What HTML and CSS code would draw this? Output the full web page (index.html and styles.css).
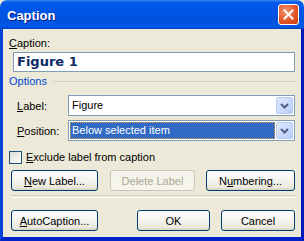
FILE: index.html
```html
<!DOCTYPE html>
<html lang="en">
<head>
  <meta charset="UTF-8" />
  <title>Caption</title>
  <link rel="stylesheet" href="styles.css">
</head>
<body>
  <div class="window">
    <div class="titlebar">
      <span class="title">Caption</span>
      <span class="close-btn">
        <svg width="11" height="11" viewBox="0 0 11 11">
          <path d="M1.5 1.5 L9.5 9.5 M9.5 1.5 L1.5 9.5" stroke="#fff" stroke-width="2" stroke-linecap="square"/>
        </svg>
      </span>
    </div>

    <div class="client">
      <div class="field-label"><u>C</u>aption:</div>
      <div class="textbox">Figure 1</div>

      <div class="group-head">
        <span>Options</span>
        <span class="rule"></span>
      </div>

      <div class="option-rows">
        <span class="row-label"><u>L</u>abel:</span>
        <div class="combo">
          <span class="combo-text">Figure</span>
          <span class="combo-btn">
            <svg width="9" height="6" viewBox="0 0 9 6"><path d="M1 1 L4.5 4.5 L8 1" fill="none" stroke="#4d6185" stroke-width="2"/></svg>
          </span>
        </div>

        <span class="row-label"><u>P</u>osition:</span>
        <div class="combo">
          <span class="combo-text selected">Below selected item</span>
          <span class="combo-btn">
            <svg width="9" height="6" viewBox="0 0 9 6"><path d="M1 1 L4.5 4.5 L8 1" fill="none" stroke="#4d6185" stroke-width="2"/></svg>
          </span>
        </div>
      </div>

      <div class="check-row">
        <span class="checkbox"></span>
        <span><u>E</u>xclude label from caption</span>
      </div>

      <div class="button-row">
        <button class="btn btn-new"><u>N</u>ew Label...</button>
        <button class="btn btn-delete" disabled>Delete Label</button>
        <button class="btn btn-numbering">N<u>u</u>mbering...</button>
      </div>

      <div class="separator"></div>

      <div class="button-row">
        <button class="btn btn-auto"><u>A</u>utoCaption...</button>
        <button class="btn btn-ok">OK</button>
        <button class="btn btn-cancel">Cancel</button>
      </div>
    </div>
  </div>
</body>
</html>
```

FILE: styles.css
```css
body {
  margin: 0;
  padding: 0;
  width: 304px;
  height: 241px;
  overflow: hidden;
  background: #ece9d8;
  font-family: 'Liberation Sans', Arial, sans-serif;
  font-size: 11px;
  color: #000;
}

u {
  text-decoration: underline;
  text-underline-offset: 1px;
}

.window {
  width: 304px;
  height: 241px;
  display: flex;
  flex-direction: column;
}

.titlebar {
  height: 29px;
  flex: none;
  display: flex;
  align-items: center;
  justify-content: space-between;
  padding: 0 5px 0 7px;
  box-sizing: border-box;
  border-radius: 7px 7px 0 0;
  background: linear-gradient(to bottom,
    #3d8cf5 0px, #0a5fe8 2px, #0058ee 4px, #0055e5 12px,
    #0052dc 20px, #0059ea 25px, #0050d6 28px, #0042c0 29px);
}

.title {
  color: #fff;
  font-weight: bold;
  font-size: 13px;
  text-shadow: 1px 1px 0 #0a1f88;
  padding-top: 1px;
}

.close-btn {
  width: 21px;
  height: 21px;
  box-sizing: border-box;
  border: 1px solid #fff;
  border-radius: 3px;
  background: radial-gradient(circle at 35% 30%, #f0906a 0%, #e2582a 55%, #c93d10 100%);
  display: flex;
  align-items: center;
  justify-content: center;
}

.client {
  flex: 1;
  display: flex;
  flex-direction: column;
  padding: 8px 6px 0 6px;
  border-left: 3px solid #0842d6;
  border-right: 3px solid #0019b8;
  border-bottom: 4px solid #0022c8;
}

.field-label {
  line-height: 13px;
}

.textbox {
  margin: 2px 0 0 4px;
  height: 20px;
  box-sizing: border-box;
  border: 1px solid #7f9db9;
  background: #fff;
  padding-left: 3px;
  font-family: 'DejaVu Sans', sans-serif;
  font-weight: bold;
  font-size: 13px;
  line-height: 18px;
  color: #0b2a66;
}

.group-head {
  margin-top: 3px;
  display: flex;
  align-items: center;
  line-height: 13px;
  color: #0046d5;
}

.rule {
  flex: 1;
  margin-left: 6px;
  height: 1px;
  background: #d0d0bf;
}

.option-rows {
  margin-top: 7px;
  display: grid;
  grid-template-columns: 51px 1fr;
  row-gap: 4px;
  padding-left: 8px;
  align-items: center;
}

.combo {
  height: 21px;
  box-sizing: border-box;
  border: 1px solid #7f9db9;
  background: #fff;
  padding: 1px;
  display: flex;
}

.combo-text {
  flex: 1;
  padding-left: 2px;
  line-height: 17px;
  margin-right: 1px;
}

.combo-text.selected {
  background: #316ac5;
  color: #fff;
  outline: 1px dotted #e0a040;
  outline-offset: -1px;
}

.combo-btn {
  width: 17px;
  flex: none;
  box-sizing: border-box;
  border: 1px solid #b9ccf4;
  border-radius: 2px;
  background: linear-gradient(to bottom right, #dfe9fe, #b8cdf9);
  display: flex;
  align-items: center;
  justify-content: center;
}

.check-row {
  margin-top: 10px;
  display: flex;
  align-items: center;
  gap: 4px;
  line-height: 13px;
}

.checkbox {
  width: 13px;
  height: 13px;
  box-sizing: border-box;
  border: 1px solid #1c5180;
  background: linear-gradient(to bottom right, #dcdcd5, #fff);
}

.button-row {
  margin-top: 6px;
  display: flex;
  padding-left: 2px;
}

.btn {
  height: 21px;
  box-sizing: border-box;
  border: 1px solid #003c74;
  border-radius: 3px;
  background: linear-gradient(to bottom, #ffffff 0%, #f4f3ee 50%, #ece9dd 85%, #d8d2c2 100%);
  font-family: 'Liberation Sans', Arial, sans-serif;
  font-size: 11px;
  color: #000;
  padding: 0;
}

.btn:disabled {
  border-color: #c9c7ba;
  background: #f5f4ea;
  color: #aca899;
}

.btn-new { width: 87px; }
.btn-delete { width: 85px; margin-left: 12px; }
.btn-numbering { width: 89px; margin-left: 11px; }

.btn-auto { width: 87px; }
.btn-ok { width: 73px; margin-left: 39px; }
.btn-cancel { width: 74px; margin-left: 11px; }

.separator {
  margin: 4px 0 0 2px;
  height: 1px;
  border-top: 1px solid #d0d0bf;
  border-bottom: 1px solid #fff;
}

.separator + .button-row {
  margin-top: 12px;
}
```
